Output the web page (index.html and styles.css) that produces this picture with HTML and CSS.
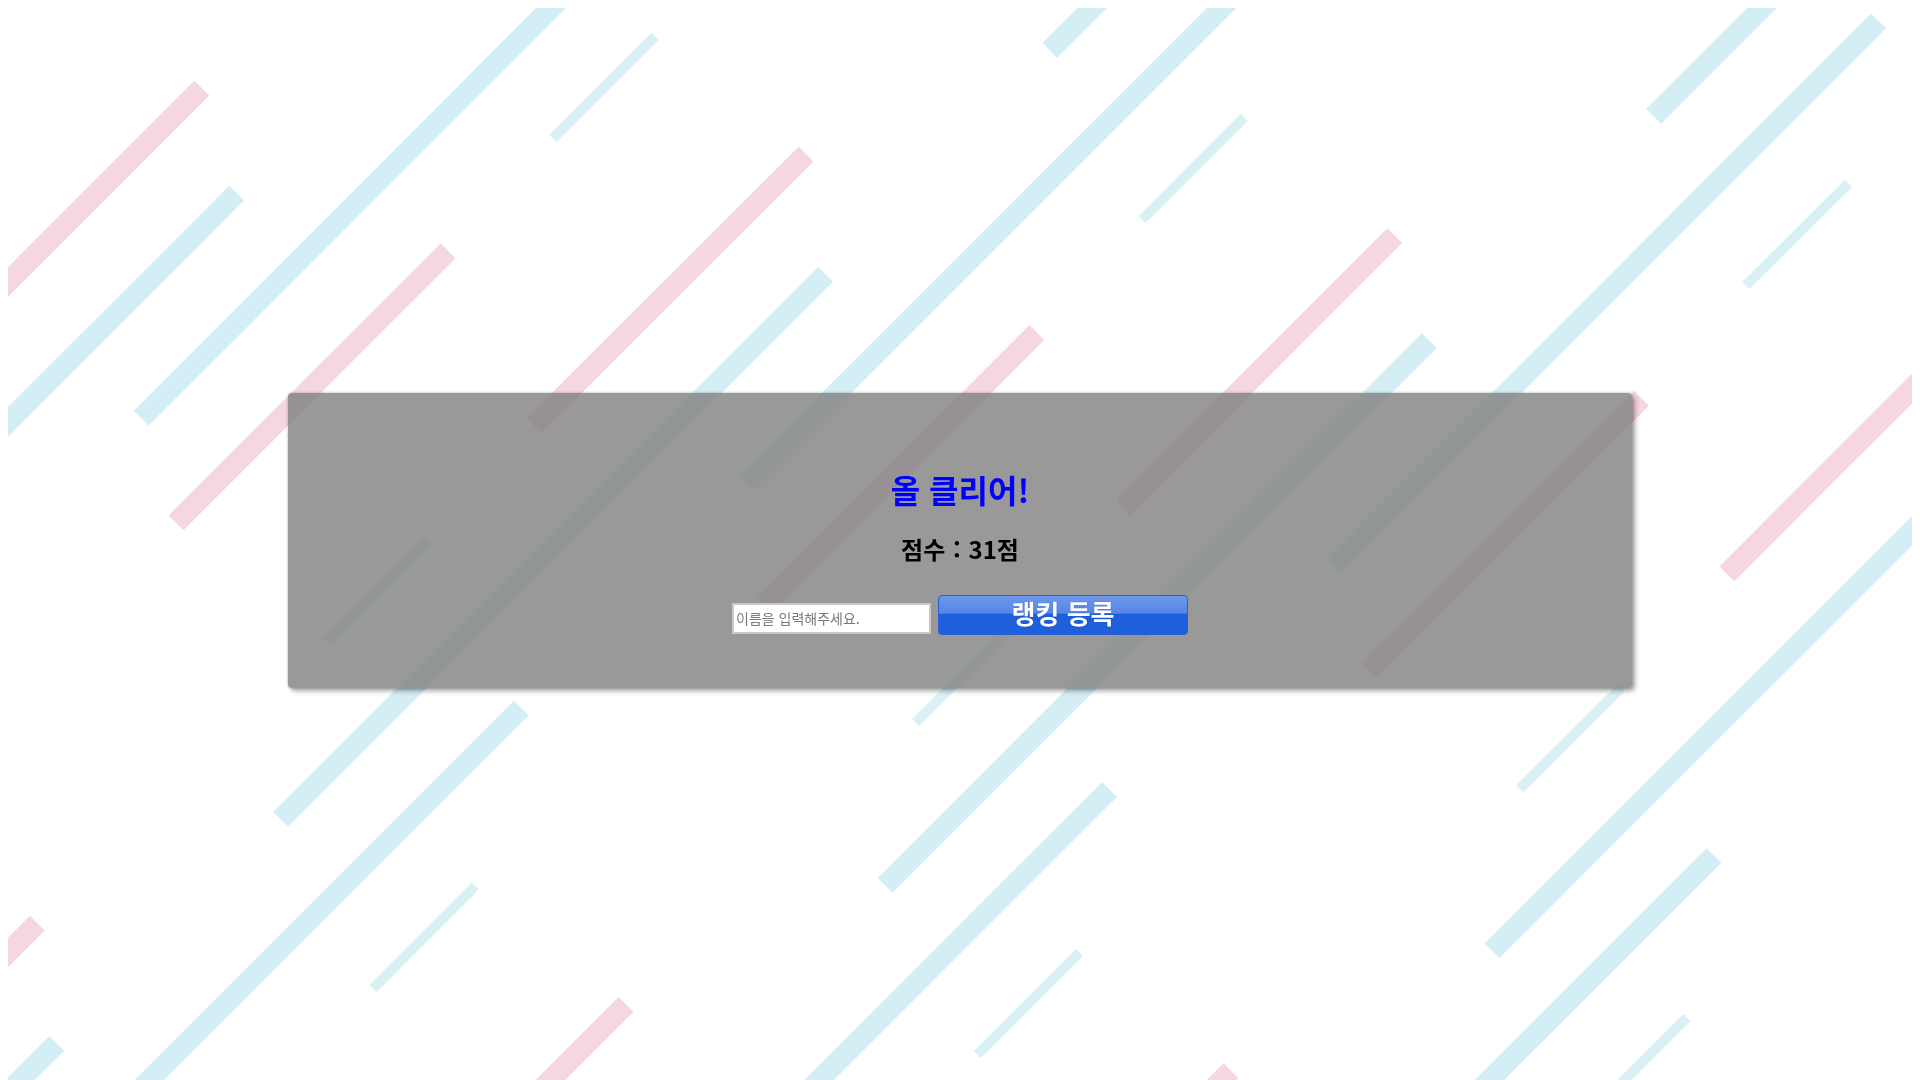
FILE: index.html
```html
<!DOCTYPE html>
<html lang="ko">
<head>
<meta charset="utf-8">
<title>올 클리어</title>
<link rel="stylesheet" href="styles.css">
</head>
<body>
<div class="stage">
  <svg class="stripes" width="1904" height="1080" viewBox="8 8 1904 1080" aria-hidden="true">
    <g class="thick pink">
      <line x1="201.8" y1="88.2" x2="-70" y2="360"/>
      <line x1="448.2" y1="250.9" x2="176" y2="522.9"/>
      <line x1="806.1" y1="154.1" x2="533.9" y2="425.8"/>
      <line x1="1036.8" y1="332.5" x2="764.8" y2="604.5"/>
      <line x1="1394.7" y1="235.6" x2="1122.7" y2="507.9"/>
      <line x1="1998.8" y1="301.8" x2="1726.8" y2="573.8"/>
      <line x1="1641.5" y1="398.2" x2="1368.8" y2="670.4"/>
      <line x1="37.3" y1="923.2" x2="-234.7" y2="1195.2"/>
      <line x1="626.1" y1="1004.4" x2="354.1" y2="1276.4"/>
      <line x1="1230.9" y1="1070.7" x2="958.9" y2="1342.7"/>
    </g>
    <g class="thick cyan">
      <line x1="236.7" y1="193.2" x2="-100" y2="530"/>
      <line x1="686" y1="-127" x2="141.2" y2="418.2"/>
      <line x1="825.5" y1="274.4" x2="280.6" y2="819.2"/>
      <line x1="1290.5" y1="-60.8" x2="745.5" y2="484.2"/>
      <line x1="1321.8" y1="-221.5" x2="1049.8" y2="50.5"/>
      <line x1="1429.4" y1="340.7" x2="885.1" y2="885.4"/>
      <line x1="2198.7" y1="-428.6" x2="1653.7" y2="116.4"/>
      <line x1="1878.6" y1="20.8" x2="1334" y2="565.8"/>
      <line x1="2037" y1="405.8" x2="1492" y2="950.8"/>
      <line x1="1109.6" y1="789.6" x2="564.6" y2="1334.6"/>
      <line x1="521.2" y1="708.2" x2="-23.8" y2="1253.2"/>
      <line x1="56.7" y1="1043.5" x2="-215.3" y2="1315.5"/>
      <line x1="1713.9" y1="855.6" x2="1441.9" y2="1127.6"/>
    </g>
    <g class="thin cyan">
      <line x1="655.1" y1="36.3" x2="553" y2="138.3"/>
      <line x1="429" y1="540.5" x2="327" y2="642.5"/>
      <line x1="1244.1" y1="117.6" x2="1142" y2="219.7"/>
      <line x1="1848.4" y1="183.4" x2="1745.9" y2="285.5"/>
      <line x1="475.3" y1="886" x2="372.9" y2="988.4"/>
      <line x1="1079.4" y1="952.6" x2="977.3" y2="1054.5"/>
      <line x1="1017.5" y1="620.5" x2="915.5" y2="722.5"/>
      <line x1="1621.6" y1="687.4" x2="1519.8" y2="788.8"/>
      <line x1="1686.8" y1="1017.8" x2="1584.8" y2="1119.8"/>
    </g>
  </svg>
</div>

<div class="overlay">
  <div class="panel">
    <h1 class="title">올 클리어!</h1>
    <h2 class="score">점수 : 31점</h2>
    <form class="rank-form">
      <input class="name-input" type="text" placeholder="이름을 입력해주세요.">
      <button class="rank-btn" type="button">랭킹 등록</button>
    </form>
  </div>
</div>
</body>
</html>
```
FILE: styles.css
```css
html, body {
  overflow: hidden;
}

body {
  margin: 8px;
  background: #ffffff;
  font-family: "Noto Sans CJK KR", "Noto Sans", sans-serif;
}

.stage {
  height: calc(100vh - 8px);
  overflow: hidden;
}

.stripes {
  display: block;
}

.stripes line {
  stroke-linecap: butt;
}

.thick {
  stroke-width: 21;
}

.thin {
  stroke-width: 10;
}

.thick.pink {
  stroke: #f5d6e3;
}

.thick.cyan {
  stroke: #d4eef5;
}

.thin.cyan {
  stroke: #d9f0f4;
}

.overlay {
  position: fixed;
  inset: 0;
  display: flex;
  align-items: center;
  justify-content: center;
}

.panel {
  width: 70%;
  height: 295px;
  box-sizing: border-box;
  padding-top: 75px;
  background: rgba(128, 128, 128, 0.8);
  border-radius: 4px;
  box-shadow: 0 0 3px rgba(0, 0, 0, 0.25), 3px 3px 5px rgba(0, 0, 0, 0.35);
  display: flex;
  flex-direction: column;
  align-items: center;
}

.title {
  margin: 0;
  font-size: 32px;
  line-height: 42px;
  font-weight: 700;
  color: #0000ff;
}

.score {
  margin: 23px 0 0;
  font-size: 24px;
  line-height: 32px;
  font-weight: 700;
  color: #000000;
  word-spacing: 1px;
}

.rank-form {
  margin: 30px 0 0;
  display: flex;
  align-items: flex-end;
  gap: 7px;
}

.name-input {
  width: 199px;
  height: 31px;
  box-sizing: border-box;
  margin: 0 0 1px;
  padding: 0 2px;
  border: 2px solid #c8c8c8;
  background: #ffffff;
  font-family: "Noto Sans CJK KR", sans-serif;
  font-size: 14px;
  color: #333;
  outline: none;
}

.name-input::placeholder {
  color: #7a7a7a;
}

.rank-btn {
  width: 250px;
  height: 40px;
  box-sizing: border-box;
  padding: 0 0 4px;
  border: 1px solid #2b5fcf;
  border-radius: 4px;
  background: linear-gradient(to bottom, #6d97ec 0%, #5686e6 45%, #1f5fdc 48%, #1f5fdc 100%);
  color: #ffffff;
  font-family: "Noto Sans CJK KR", sans-serif;
  font-size: 26px;
  font-weight: 700;
  line-height: 34px;
  text-shadow: 0 0 1px rgba(0, 40, 160, 0.6);
  cursor: pointer;
}
```
